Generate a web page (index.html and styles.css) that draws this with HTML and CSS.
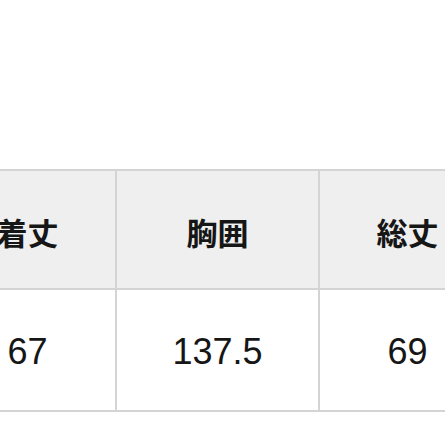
FILE: index.html
```html
<!DOCTYPE html>
<html lang="ja">
<head>
<meta charset="utf-8">
<link rel="stylesheet" href="styles.css">
</head>
<body>
<div class="size-table">
  <div class="cell head">着丈</div>
  <div class="cell head">胸囲</div>
  <div class="cell head">総丈</div>
  <div class="cell val">67</div>
  <div class="cell val">137.5</div>
  <div class="cell val">69</div>
</div>
</body>
</html>
```
FILE: styles.css
```css
html, body {
  margin: 0;
  padding: 0;
  background: #ffffff;
  overflow: hidden;
}
.size-table {
  display: grid;
  grid-template-columns: 177px 203px 177px;
  grid-template-rows: 119px 122px;
  width: max-content;
  margin-top: 169px;
  margin-left: -60px;
  border-top: 2px solid #d4d4d4;
}
.cell {
  box-sizing: border-box;
  border-right: 2px solid #d4d4d4;
  border-bottom: 2px solid #d4d4d4;
  display: flex;
  align-items: center;
  justify-content: center;
  color: #161616;
}
.head {
  background: #efefef;
  font-family: "Noto Sans CJK JP", "Noto Sans", sans-serif;
  font-weight: 700;
  font-size: 31px;
  padding-top: 4px;
}
.val {
  background: #ffffff;
  font-family: "Liberation Sans", Arial, sans-serif;
  font-size: 36px;
  padding-top: 4px;
}
```
